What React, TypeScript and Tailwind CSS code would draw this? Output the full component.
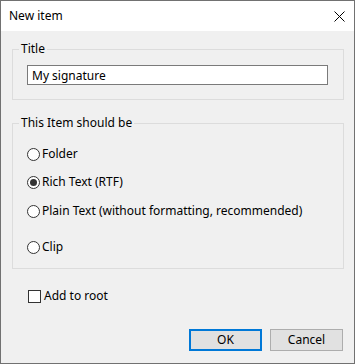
import { useState } from 'react';

type Kind = 'folder' | 'rtf' | 'plain' | 'clip';

const options: { id: Kind; label: string; gap: string }[] = [
  { id: 'folder', label: 'Folder', gap: 'mt-[15px]' },
  { id: 'rtf', label: 'Rich Text (RTF)', gap: 'mt-[12px]' },
  { id: 'plain', label: 'Plain Text (without formatting, recommended)', gap: 'mt-[13px]' },
  { id: 'clip', label: 'Clip', gap: 'mt-[20px]' },
];

function CloseIcon() {
  return (
    <svg width="11" height="11" viewBox="0 0 11 11" fill="none" stroke="#000" strokeWidth="1">
      <path d="M0.5 0.5l10 10M10.5 0.5l-10 10" />
    </svg>
  );
}

function Radio({ checked }: { checked: boolean }) {
  return (
    <span className="w-[13px] h-[13px] rounded-full border border-[#333] bg-white flex items-center justify-center shrink-0">
      {checked && <span className="w-[7px] h-[7px] rounded-full bg-[#333]" />}
    </span>
  );
}

export default function App() {
  const [kind, setKind] = useState<Kind>('rtf');
  const [title, setTitle] = useState('My signature');
  const [root, setRoot] = useState(false);

  return (
    <div
      className="w-[355px] h-[364px] border border-[#717171] bg-[#f0f0f0] flex flex-col text-[12px] leading-[16px] text-black"
      style={{ fontFamily: '"Noto Sans", "Open Sans", sans-serif' }}
    >
      {/* title bar */}
      <div className="h-[30px] bg-white flex items-center justify-between pl-[8px] pr-[9px] shrink-0">
        <span>New item</span>
        <CloseIcon />
      </div>

      <div className="flex flex-col pl-[11px] pr-[10px]">
        <fieldset className="mt-[10px] border border-[#dcdcdc] pl-[14px] pb-[14px]">
          <legend className="ml-[-8px] px-[2px] leading-[16px]">Title</legend>
          <input
            value={title}
            onChange={(e) => setTitle(e.target.value)}
            className="mt-[8px] w-[301px] h-[20px] border border-[#7a7a7a] bg-white pl-[4px] outline-none text-[12px]"
          />
        </fieldset>

        <fieldset className="mt-[15px] border border-[#dcdcdc] pl-[14px] pb-[13px] flex flex-col">
          <legend className="ml-[-8px] px-[2px] leading-[16px]">This Item should be</legend>
          {options.map((o) => (
            <label
              key={o.id}
              onClick={() => setKind(o.id)}
              className={`${o.gap} h-[16px] flex items-center gap-[2px] cursor-default`}
            >
              <Radio checked={kind === o.id} />
              <span>{o.label}</span>
            </label>
          ))}
        </fieldset>

        <label
          onClick={() => setRoot(!root)}
          className="mt-[19px] ml-[16px] h-[16px] flex items-center gap-[3px] cursor-default"
        >
          <span className="w-[13px] h-[13px] border border-[#333] bg-white flex items-center justify-center text-[10px]">
            {root ? '✓' : ''}
          </span>
          <span>Add to root</span>
        </label>

        <div className="mt-[25px] flex justify-end gap-[8px] pr-[1px]">
          <button className="w-[73px] h-[22px] border-2 border-[#0078d7] bg-[#e1e1e1]">OK</button>
          <button className="w-[73px] h-[22px] border border-[#adadad] bg-[#e1e1e1]">Cancel</button>
        </div>
      </div>
    </div>
  );
}
